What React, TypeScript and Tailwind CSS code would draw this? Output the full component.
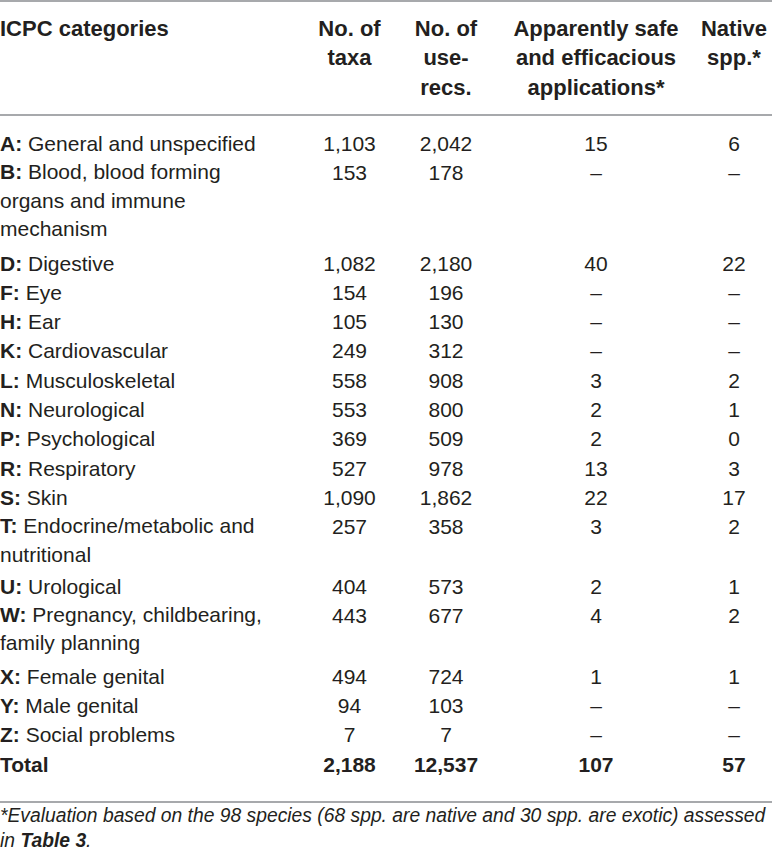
type Row = {
  k: string;
  lines: string[];
  taxa: string;
  recs: string;
  safe: string;
  native: string;
  extra?: string;
};

const rows: Row[] = [
  { k: "A:", lines: ["General and unspecified"], taxa: "1,103", recs: "2,042", safe: "15", native: "6" },
  { k: "B:", lines: ["Blood, blood forming", "organs and immune", "mechanism"], taxa: "153", recs: "178", safe: "–", native: "–", extra: "pb-[5px]" },
  { k: "D:", lines: ["Digestive"], taxa: "1,082", recs: "2,180", safe: "40", native: "22" },
  { k: "F:", lines: ["Eye"], taxa: "154", recs: "196", safe: "–", native: "–" },
  { k: "H:", lines: ["Ear"], taxa: "105", recs: "130", safe: "–", native: "–" },
  { k: "K:", lines: ["Cardiovascular"], taxa: "249", recs: "312", safe: "–", native: "–" },
  { k: "L:", lines: ["Musculoskeletal"], taxa: "558", recs: "908", safe: "3", native: "2" },
  { k: "N:", lines: ["Neurological"], taxa: "553", recs: "800", safe: "2", native: "1" },
  { k: "P:", lines: ["Psychological"], taxa: "369", recs: "509", safe: "2", native: "0" },
  { k: "R:", lines: ["Respiratory"], taxa: "527", recs: "978", safe: "13", native: "3" },
  { k: "S:", lines: ["Skin"], taxa: "1,090", recs: "1,862", safe: "22", native: "17" },
  { k: "T:", lines: ["Endocrine/metabolic and", "nutritional"], taxa: "257", recs: "358", safe: "3", native: "2", extra: "pb-[2.5px]" },
  { k: "U:", lines: ["Urological"], taxa: "404", recs: "573", safe: "2", native: "1" },
  { k: "W:", lines: ["Pregnancy, childbearing,", "family planning"], taxa: "443", recs: "677", safe: "4", native: "2", extra: "pb-[4px]" },
  { k: "X:", lines: ["Female genital"], taxa: "494", recs: "724", safe: "1", native: "1" },
  { k: "Y:", lines: ["Male genital"], taxa: "94", recs: "103", safe: "–", native: "–" },
  { k: "Z:", lines: ["Social problems"], taxa: "7", recs: "7", safe: "–", native: "–" },
];

const cols = "grid grid-cols-[303px_93px_100px_200px_76px]";

function Rule() {
  return <div className="h-[2px] bg-[#a7a9ac]" />;
}

function BodyRow({ row }: { row: Row }) {
  const multi = row.lines.length > 1;
  return (
    <div className={`${cols} items-start ${row.extra ?? ""}`}>
      <div className={multi ? "leading-[28.4px]" : "leading-[29.3px]"}>
        <span className="font-bold">{row.k}</span> {row.lines[0]}
        {row.lines.slice(1).map((l) => (
          <div key={l}>{l}</div>
        ))}
      </div>
      <div className="text-center leading-[29.3px]">{row.taxa}</div>
      <div className="text-center leading-[29.3px]">{row.recs}</div>
      <div className="text-center leading-[29.3px]">{row.safe}</div>
      <div className="text-center leading-[29.3px]">{row.native}</div>
    </div>
  );
}

export default function App() {
  return (
    <div className="w-[772px] h-[859px] bg-white text-[#231f20] font-['Liberation_Sans',Arial,sans-serif] overflow-hidden">
      <Rule />
      <div className={`${cols} pt-[11.6px] pb-[11.5px] font-bold text-[22px] leading-[29.65px]`}>
        <div>ICPC categories</div>
        <div className="text-center">
          No. of
          <br />
          taxa
        </div>
        <div className="text-center">
          No. of
          <br />
          use-
          <br />
          recs.
        </div>
        <div className="text-center">
          Apparently safe
          <br />
          and efficacious
          <br />
          applications*
        </div>
        <div className="text-center">
          Native
          <br />
          spp.*
        </div>
      </div>
      <Rule />
      <div className="pt-[13px] pb-[22.5px] text-[21px]">
        {rows.map((r) => (
          <BodyRow key={r.k} row={r} />
        ))}
        <div className={`${cols} font-bold leading-[29.3px]`}>
          <div>Total</div>
          <div className="text-center">2,188</div>
          <div className="text-center">12,537</div>
          <div className="text-center">107</div>
          <div className="text-center">57</div>
        </div>
      </div>
      <Rule />
      <p className="italic text-[19.3px] leading-[25px] whitespace-nowrap">
        *Evaluation based on the 98 species (68 spp. are native and 30 spp. are exotic) assessed
        <br />
        in <span className="font-bold">Table 3</span>.
      </p>
    </div>
  );
}
